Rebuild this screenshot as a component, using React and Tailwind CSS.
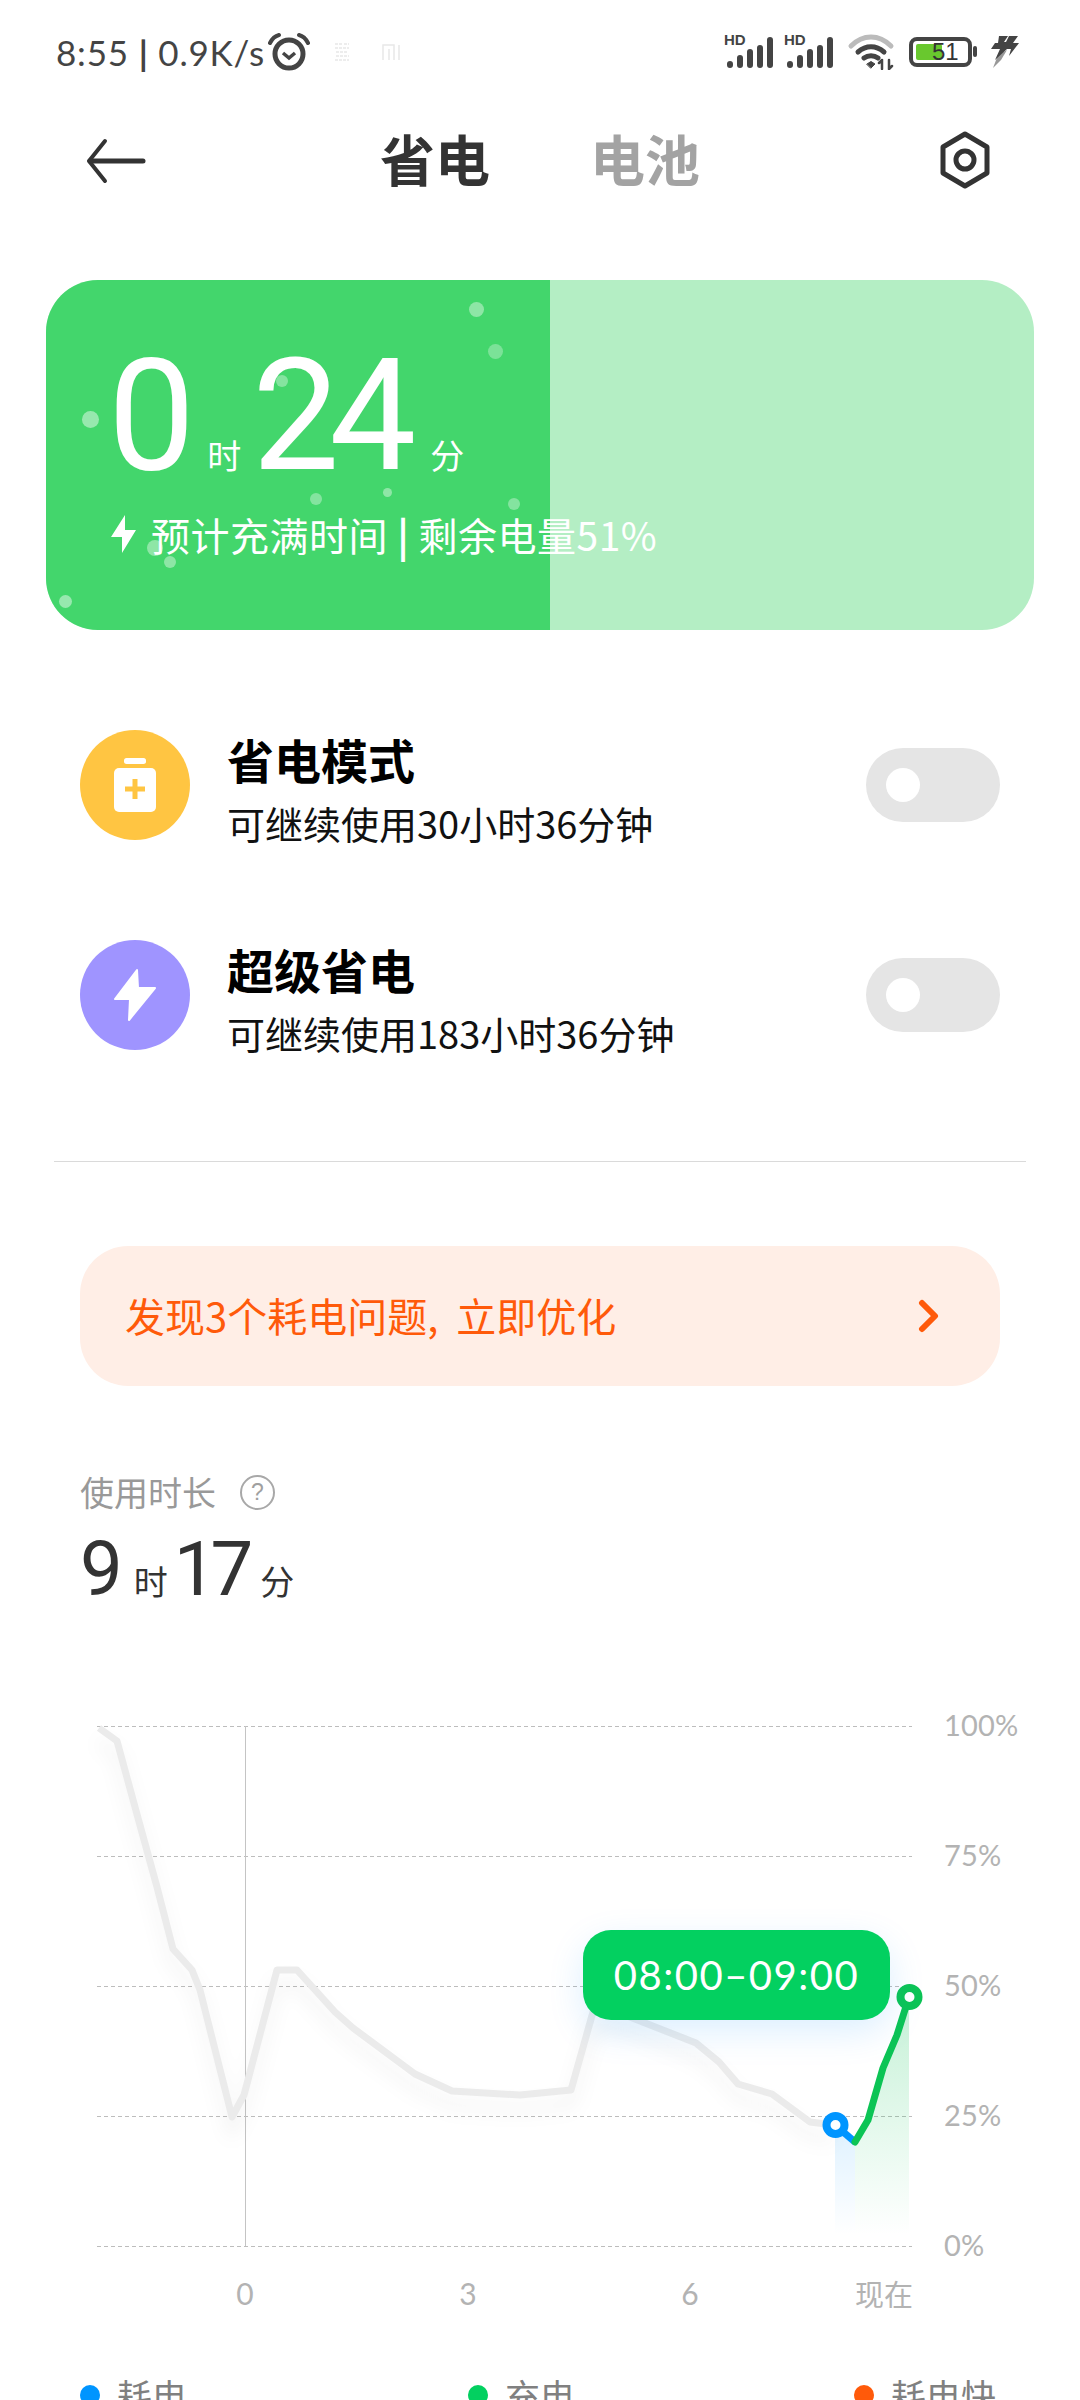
import React from "react";

const cjk = { fontFamily: '"Noto Sans CJK SC", sans-serif' };
const num = { fontFamily: 'Roboto, sans-serif' };
const dots = [
  [476, 309, 7.5, 0.4], [495, 351, 7.5, 0.3], [90, 419, 8.5, 0.45], [282, 381, 6, 0.35], [316, 499, 6, 0.35],
  [387, 492, 4.5, 0.4], [514, 504, 6, 0.35], [155, 548, 8, 0.4], [170, 562, 6, 0.4], [65, 601, 6.5, 0.45],
];
const grayLine = "99,1728 117,1741 138,1818 157,1887 173,1949 192,1970 200,1990 232,2117 244,2095 277,1970 297,1970 335,2012 353,2028 415,2074 452,2091 520,2095 571,2090 593,2012 625,2015 640,2021 696,2043 719,2062 738,2084 772,2094 810,2122 834,2125";
const greenLine = "855,2142 868,2120 883,2068 897,2035 909,1997";

function Signal() {
  return (
    <div className="relative w-[50px] h-[36px]">
      <span className="absolute left-[-2px] top-[-2px] text-[15px] leading-[15px] font-bold text-[#444]" style={{ fontFamily: '"Liberation Sans", sans-serif' }}>HD</span>
      <svg className="absolute left-0 top-0" width="50" height="36" viewBox="0 0 50 36">
        <g stroke="#444" strokeWidth="6" strokeLinecap="round">
          <path d="M4 31v-1M14 31v-7M24 31v-13M34 31v-17M44 31v-25" />
        </g>
      </svg>
    </div>
  );
}

function StatusBar() {
  return (
    <div className="h-[104px] flex items-center pl-[56px] pr-[60px] text-[#444]">
      <span className="text-[35px] leading-none tracking-[0.8px] whitespace-nowrap" style={{ fontFamily: 'Lato, "Open Sans", sans-serif' }}>8:55 <b className="font-bold">|</b> 0.9K/s</span>
      <svg className="ml-[3px]" width="42" height="40" viewBox="0 0 42 40" fill="none" stroke="#444">
        <circle cx="21" cy="22" r="14" strokeWidth="5" />
        <path d="M15 21l6 5 6-5" strokeWidth="3.500" />
        <path d="M2 11c2-4 5-7 9-8M40 11c-2-4-5-7-9-8" strokeWidth="4" strokeLinecap="round" />
      </svg>
      <svg className="ml-[24px]" width="66" height="20" viewBox="0 0 66 20" fill="none" stroke="#e8e8e8" strokeWidth="1.500">
        <path d="M1 2h8M10 2h5M1 6h14M2 10h12M2 14h13M1 18h14" strokeDasharray="3 1" />
        <path d="M49 18V3h11v15M55 7v11M65 3v15" />
      </svg>
      <div className="ml-auto flex items-center">
        <Signal />
        <div className="ml-[10px]"><Signal /></div>
        <svg className="ml-[11px]" width="50" height="36" viewBox="0 0 50 36" fill="none" strokeLinecap="round">
          <path d="M4 12C16 0 32 0 44 12" stroke="#bbb" strokeWidth="5" />
          <path d="M11 18c8-7 18-7 26 0" stroke="#444" strokeWidth="5" />
          <path d="M17 24c4-3 10-3 14 0" stroke="#444" strokeWidth="5" />
          <path d="M20 30l4-2.500 4 2.500-4 4z" fill="#444" stroke="#444" strokeWidth="1" />
          <path d="M35 35v-9M32 29l3-3M42 26v9M45 32l-3 3" stroke="#444" strokeWidth="2.500" />
        </svg>
        <div className="ml-[12px] relative w-[68px] h-[30px]">
          <div className="absolute left-0 top-0 w-[63px] h-[30px] rounded-[8px] border-[4px] border-[#444] p-[3px]">
            <div className="h-full w-[26px] bg-[#69C82E] rounded-[2px]" />
          </div>
          <div className="absolute right-0 top-[9px] w-[4px] h-[11px] rounded-[2px] bg-[#444]" />
          <span className="absolute left-[23px] top-[3px] text-[24px] leading-[24px] text-[#333]" style={{ fontFamily: '"Liberation Sans", sans-serif' }}>51</span>
        </div>
        <svg className="ml-[13px]" width="30" height="32" viewBox="0 0 30 32" fill="#444">
          <path d="M9 0h9l-4 6h2l3-6h9l-5 7h6L19 20l2-7h-4L5 24l5-11H1l4-6h3z" />
          <path d="M8 19l9-5-6 10L3 32z" opacity=".55" />
        </svg>
      </div>
    </div>
  );
}

function Header() {
  return (
    <div className="h-[116px] relative flex items-center justify-center" style={cjk}>
      <svg className="absolute left-[85px] top-[34px]" width="62" height="46" viewBox="0 0 62 46" fill="none" stroke="#333" strokeLinecap="round" strokeLinejoin="round">
        <path d="M20 3L4 23l16 20" strokeWidth="4" />
        <path d="M5 23h53" strokeWidth="5" />
      </svg>
      <div className="flex gap-[100px] text-[55px] leading-none font-bold mt-[-10px]">
        <span className="text-[#333]">省电</span>
        <span className="text-[#A3A3A3]">电池</span>
      </div>
      <svg className="absolute left-[938px] top-[26px]" width="54" height="60" viewBox="0 0 54 60" fill="none" stroke="#333">
        <path d="M27 4l22 13v26L27 56 5 43V17z" strokeWidth="5" strokeLinejoin="round" />
        <circle cx="27" cy="30" r="9" strokeWidth="5" />
      </svg>
    </div>
  );
}

function TimeCard() {
  return (
    <div className="relative mt-[60px] mx-[46px] h-[350px] rounded-[52px] overflow-hidden bg-[#B4EEC4] text-white">
      <div className="absolute left-0 top-0 bottom-0 w-[504px] bg-[#43D66C]" />
      {dots.map(([x, y, r, o]) => (
        <div key={x} className="absolute rounded-full bg-white" style={{ left: x - 46 - r, top: y - 280 - r, width: r * 2, height: r * 2, opacity: o }} />
      ))}
      <div className="relative pt-[71px]">
        <div className="flex items-baseline h-[130px] pl-[62px]">
          <span className="text-[155px] leading-[130px]" style={num}>0</span>
          <span className="text-[34px] leading-none ml-[12px]" style={cjk}>时</span>
          <span className="text-[155px] leading-[130px] tracking-[-10px] ml-[11px]" style={num}>24</span>
          <span className="text-[34px] leading-none ml-[24px]" style={cjk}>分</span>
        </div>
        <div className="flex items-center mt-[31px] h-[44px] pl-[65px]">
          <svg width="26" height="38" viewBox="0 0 26 38" fill="#fff"><path d="M14 0v15h11L11 38V22H0z" /></svg>
          <span className="ml-[14px] text-[39px] leading-none whitespace-nowrap tracking-[0.5px]" style={cjk}>预计充满时间 <b className="font-bold">|</b> 剩余电量51%</span>
        </div>
      </div>
    </div>
  );
}

function ModeRow({ title, sub, color, children, mt }) {
  return (
    <div className={`flex items-center pl-[80px] pr-[80px] h-[110px] ${mt}`} style={cjk}>
      <div className="w-[110px] h-[110px] rounded-full flex items-center justify-center" style={{ background: color }}>{children}</div>
      <div className="ml-[37px] flex flex-col">
        <span className="text-[47px] leading-[60px] font-bold text-black mt-[3px]">{title}</span>
        <span className="text-[38px] leading-[44px] text-[#111] mt-[12px]">{sub}</span>
      </div>
      <div className="ml-auto w-[134px] h-[74px] rounded-[37px] bg-[#E5E5E5] flex items-center pl-[20px]">
        <div className="w-[34px] h-[34px] rounded-full bg-white" />
      </div>
    </div>
  );
}

function Modes() {
  return (
    <>
      <ModeRow title="省电模式" sub="可继续使用30小时36分钟" color="#FFC542" mt="mt-[100px]">
        <svg width="44" height="54" viewBox="0 0 44 54" fill="#fff">
          <rect x="11" y="0" width="22" height="6" rx="2.500" />
          <rect x="1" y="10" width="42" height="44" rx="5" />
          <path d="M22 21v20M12 31h20" stroke="#FFC542" strokeWidth="5" />
        </svg>
      </ModeRow>
      <ModeRow title="超级省电" sub="可继续使用183小时36分钟" color="#9F94FF" mt="mt-[100px]">
        <svg width="44" height="54" viewBox="0 0 44 54" fill="#fff" stroke="#fff" strokeWidth="2" strokeLinejoin="round">
          <path d="M24 2L2 31h15l-1 21 26-32H25z" />
        </svg>
      </ModeRow>
    </>
  );
}

function Banner() {
  return (
    <div className="mt-[84px] mx-[80px] h-[140px] rounded-[48px] bg-[#FFEEE6] flex items-center pl-[45px] pr-[60px] text-[#FF5A0A]" style={cjk}>
      <span className="text-[40px] leading-none mt-[-2px] whitespace-pre">发现3个耗电问题,  立即优化</span>
      <svg className="ml-auto" width="22" height="34" viewBox="0 0 22 34" fill="none" stroke="#FF5A0A" strokeWidth="6" strokeLinecap="round" strokeLinejoin="round">
        <path d="M4 4l13 13L4 30" />
      </svg>
    </div>
  );
}

function Usage() {
  return (
    <div className="mt-[89px] pl-[80px] text-[#333]" style={cjk}>
      <div className="flex items-center h-[34px]">
        <span className="text-[34px] leading-none text-[#999]">使用时长</span>
        <span className="ml-[24px] w-[35px] h-[35px] rounded-full border-[2px] border-[#A8A8A8] flex items-center justify-center text-[23px] leading-none text-[#A0A0A0]" style={{ fontFamily: '"Liberation Sans", sans-serif' }}>?</span>
      </div>
      <div className="flex items-baseline mt-[30px] h-[60px]">
        <span className="text-[76px] leading-[60px]" style={num}>9</span>
        <span className="text-[34px] leading-none ml-[11px]">时</span>
        <span className="text-[76px] leading-[60px] ml-[6px] tracking-[-6px]" style={num}>17</span>
        <span className="text-[34px] leading-none ml-[13px]">分</span>
      </div>
    </div>
  );
}

function Chart() {
  const labels = [["100%", 1724], ["75%", 1854], ["50%", 1984], ["25%", 2114], ["0%", 2244]];
  const xs = [["0", 245], ["3", 468], ["6", 690]];
  const wide = { fontFamily: 'Lato, "Open Sans", sans-serif' };
  return (
    <div className="absolute left-0 top-[1700px] w-[1080px] h-[640px]">
      <svg className="absolute inset-0" width="1080" height="640" viewBox="0 1700 1080 640" fill="none">
        <defs>
          <filter id="blurShadow" x="-10%" y="-10%" width="120%" height="130%"><feGaussianBlur stdDeviation="9" /></filter>
          <linearGradient id="greenFill" x1="0" y1="1997" x2="0" y2="2235" gradientUnits="userSpaceOnUse">
            <stop offset="0" stopColor="#0CC455" stopOpacity=".24" />
            <stop offset="1" stopColor="#0CC455" stopOpacity="0" />
          </linearGradient>
          <linearGradient id="blueFill" x1="0" y1="2125" x2="0" y2="2235" gradientUnits="userSpaceOnUse">
            <stop offset="0" stopColor="#0095FF" stopOpacity=".13" />
            <stop offset="1" stopColor="#0095FF" stopOpacity="0" />
          </linearGradient>
        </defs>
        {[1726, 1856, 1986, 2116, 2246].map((y) => (
          <path key={y} d={`M97 ${y + 0.5}H912`} stroke="#BDBDBD" strokeWidth="1" strokeDasharray="4 3" />
        ))}
        <path d="M245.500 1726V2246" stroke="#C4C4C4" strokeWidth="1" />
        <polyline points={grayLine} stroke="#000" strokeOpacity=".05" strokeWidth="8" filter="url(#blurShadow)" transform="translate(0 14)" />
        <polyline points={grayLine} stroke="#EBEBEB" strokeWidth="7" strokeLinejoin="round" />
        <polygon points="835,2125 855,2142 855,2235 835,2235" fill="url(#blueFill)" />
        <polygon points={`${greenLine} 909,2235 855,2235`} fill="url(#greenFill)" />
        <path d="M835 2125L855 2142" stroke="#0095FF" strokeWidth="7" />
        <polyline points={greenLine} stroke="#0CC455" strokeWidth="7" strokeLinejoin="round" strokeLinecap="round" />
        <circle cx="835.500" cy="2125" r="9" fill="#fff" stroke="#0095FF" strokeWidth="8" />
        <circle cx="909.500" cy="1997" r="9" fill="#fff" stroke="#0CC455" strokeWidth="8" />
      </svg>
      <div className="absolute left-[583px] top-[230px] w-[307px] h-[90px] rounded-[28px] bg-[#03D060] flex items-center justify-center text-white text-[40px] leading-none tracking-[1.5px] shadow-[0_12px_36px_rgba(0,140,255,0.14)]" style={wide}>08:00–09:00</div>
      {labels.map(([t, y]) => (
        <span key={t} className="absolute left-[944px] text-[29px] leading-none tracking-[0.2px] text-[#B3B3B3] -translate-y-1/2" style={{ top: y - 1700, ...wide }}>{t}</span>
      ))}
      {xs.map(([t, x]) => (
        <span key={t} className="absolute top-[593px] text-[30px] leading-none text-[#B3B3B3] -translate-x-1/2 -translate-y-1/2" style={{ left: x, ...wide }}>{t}</span>
      ))}
      <span className="absolute left-[855px] top-[593px] text-[29px] leading-none text-[#B3B3B3] -translate-y-1/2" style={cjk}>现在</span>
    </div>
  );
}

function Legend() {
  const items = [["耗电", 80], ["充电", 468], ["耗电快", 854]];
  const colors = ["#0095FF", "#03D060", "#FF5A0A"];
  return (
    <div className="absolute left-0 top-[2375px] w-[1080px] h-[40px]" style={cjk}>
      {items.map(([t, x], i) => (
        <div key={t} className="absolute flex items-center" style={{ left: x }}>
          <div className="w-[20px] h-[20px] rounded-full" style={{ background: colors[i] }} />
          <span className="ml-[17px] text-[35px] leading-[40px] text-[#808080]">{t}</span>
        </div>
      ))}
    </div>
  );
}

export default function App() {
  return (
    <div className="relative w-[1080px] h-[2400px] overflow-hidden bg-white flex flex-col">
      <StatusBar />
      <Header />
      <TimeCard />
      <Modes />
      <div className="mt-[111px] mx-[54px] h-[1px] bg-[#DADADA]" />
      <Banner />
      <Usage />
      <Chart />
      <Legend />
    </div>
  );
}
